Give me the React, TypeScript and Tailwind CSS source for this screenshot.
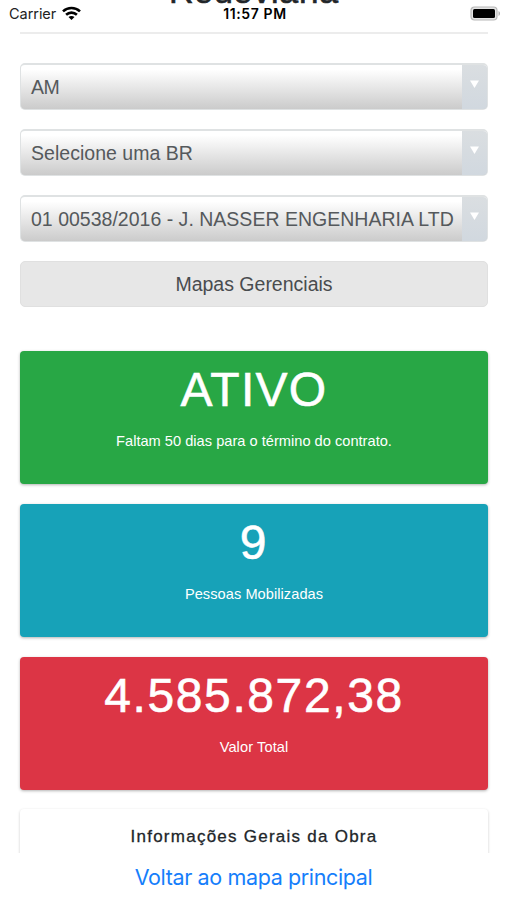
import { useState } from "react";

const filters = [
  { name: "uf", label: "Estado", value: "AM", text: "tracking-[-0.4px]" },
  { name: "br", label: "BR", value: "Selecione uma BR", text: "tracking-[0.03px]" },
  {
    name: "contrato",
    label: "Contrato",
    value: "01 00538/2016 - J. NASSER ENGENHARIA LTD",
    text: "tracking-[0.01px]",
  },
];

const cards = [
  {
    value: "ATIVO",
    label: "Faltam 50 dias para o término do contrato.",
    color: "bg-[#28a745]",
    valueText: "tracking-[1.3px]",
    labelText: "tracking-[0.02px]",
  },
  {
    value: "9",
    label: "Pessoas Mobilizadas",
    color: "bg-[#17a2b8]",
    valueText: "tracking-[1.6px]",
    labelText: "tracking-[0.06px]",
  },
  {
    value: "4.585.872,38",
    label: "Valor Total",
    color: "bg-[#dc3545]",
    valueText: "tracking-[1.6px]",
    labelText: "tracking-[0.1px]",
  },
];

function StatusBar() {
  return (
    <header className="absolute inset-x-0 top-0 h-7 font-['Inter',sans-serif] text-black">
      <div className="grid grid-cols-3 items-center pl-[9px] pr-[6px] pt-[4px]">
        <div className="flex items-center gap-[6px]">
          <span className="text-[14.5px] leading-5 tracking-[-0.05px] text-[#222]">Carrier</span>
          <svg className="-mt-[2px]" width="19" height="15" viewBox="0 0 19 15" fill="none" stroke="currentColor" strokeWidth="2.6" aria-label="Wi-Fi">
            <path d="M1 5.4C5.8 0.9 13.2 0.9 18 5.4" />
            <path d="M4.1 8.8C7.2 5.9 11.8 5.9 14.9 8.8" />
            <path d="M9.5 14L6.5 11C8.2 9.5 10.8 9.5 12.5 11Z" fill="currentColor" stroke="none" />
          </svg>
        </div>
        <span className="text-center text-[14px] font-semibold leading-5 tracking-[0.6px]">11:57 PM</span>
        <svg className="-mt-[2px] justify-self-end" width="31" height="15" viewBox="0 0 31 15" aria-label="Bateria">
          <rect x="1" y="1" width="26" height="13" rx="3.5" fill="#e4e4e4" stroke="#b8b8b8" strokeWidth="1.2" />
          <rect x="3" y="3" width="22" height="9" rx="1.5" fill="#000" />
          <path d="M28.5 5v5c2-.8 2-4.2 0-5Z" fill="#b0b0b0" />
        </svg>
      </div>
    </header>
  );
}

export default function App() {
  const [selected, setSelected] = useState("");

  return (
    <div className="relative flex h-[900px] w-[507px] flex-col overflow-hidden bg-white font-['Liberation_Sans',Arial,sans-serif]">
      <main className="min-h-0 flex-1 overflow-hidden px-5">
        {/* Page title scrolled under the status bar */}
        <div className="flex h-[34px] w-[468px] flex-col justify-end overflow-hidden border-b-2 border-[#ececec]">
          <h1 className="mb-[22px] text-center text-[34px] leading-[38px] tracking-[0.75px] text-[#212529] [-webkit-text-stroke:0.6px]">
            Rodoviária
          </h1>
        </div>

        <form className="mt-[29px] flex w-[468px] flex-col gap-5">
          {filters.map((filter) => (
            <button
              key={filter.name}
              type="button"
              aria-label={filter.label}
              aria-pressed={selected === filter.name}
              onClick={() => setSelected(filter.name)}
              className="flex h-[46.5px] -mb-[0.5px] overflow-hidden rounded-[5px] border border-t-2 border-[#dfe2e3] bg-linear-to-b from-white from-10% to-[#cbcbcb] text-left"
            >
              <span className="flex-1 whitespace-nowrap pl-[10px] text-[19.5px] leading-[45px] text-[#55595c]">
                <span className={filter.text}>{filter.value}</span>
              </span>
              <span className="flex h-full w-[25px] justify-center bg-linear-to-b from-[#dadee1] to-[#d1d8df] pt-[15px]">
                <svg width="9" height="8" viewBox="0 0 9 8" fill="#fff">
                  <path d="M0 0.5h9L4.5 8Z" />
                </svg>
              </span>
            </button>
          ))}
          <button
            type="button"
            className="h-[46px] rounded-[5px] border border-[#e0e0e0] bg-[#e7e7e7] pt-[1px] text-[19.5px] text-[#494c4f]"
          >
            Mapas Gerenciais
          </button>
        </form>

        <section className="mt-11 flex w-[468px] flex-col gap-[19.8px]">
          {cards.map((card) => (
            <div
              key={card.label}
              className={`flex h-[133px] shrink-0 flex-col items-center rounded-[4px] text-white shadow-[0_1px_3px_rgba(0,0,0,0.3)] ${card.color}`}
            >
              <p className="pt-[11px] text-[48px] leading-[56px] [-webkit-text-stroke:0.6px]">
                <span className={card.valueText}>{card.value}</span>
              </p>
              <p className="pt-[13px] text-[14.6px] leading-5">
                <span className={card.labelText}>{card.label}</span>
              </p>
            </div>
          ))}
          <div className="h-[133px] shrink-0 rounded-[4px] bg-white pt-4 text-center shadow-[0_1px_3px_rgba(0,0,0,0.2)]">
            <h2 className="text-[17px] leading-6 tracking-[1.25px] text-[#212529] [-webkit-text-stroke:0.3px]">
              Informações Gerais da Obra
            </h2>
          </div>
        </section>
      </main>

      <footer className="flex h-[47px] shrink-0 justify-center bg-white font-['Inter',sans-serif]">
        <a href="#" className="text-[21.5px] leading-[48px] tracking-[-0.37px] text-[#157efb]">
          Voltar ao mapa principal
        </a>
      </footer>

      <StatusBar />
    </div>
  );
}
